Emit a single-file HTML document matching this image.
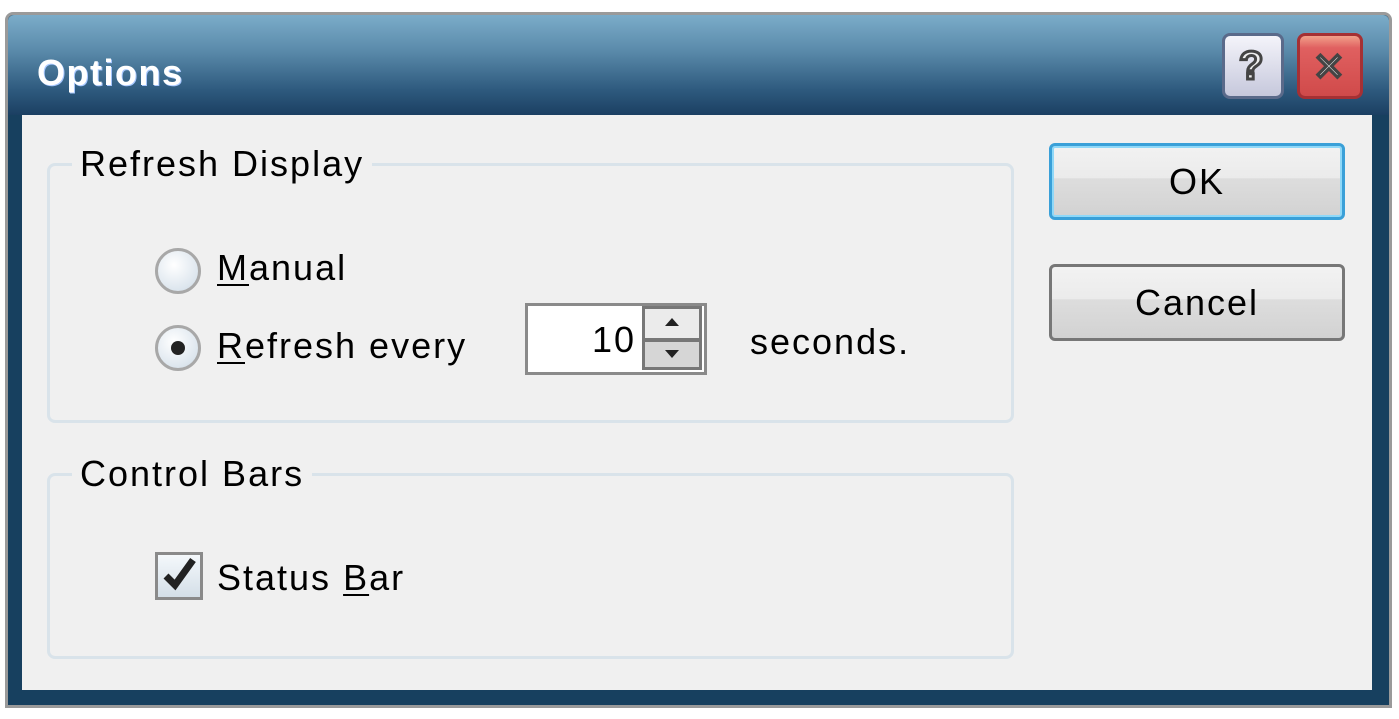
<!DOCTYPE html>
<html><head><meta charset="utf-8"><style>
*{margin:0;padding:0;box-sizing:border-box}
body{width:1399px;height:719px;background:#fff;position:relative;overflow:hidden;font-family:"Liberation Sans",sans-serif;}
.abs{position:absolute}
.win{left:5px;top:12px;width:1387px;height:696px;background:#17405f;border:3px solid #9a9a9a;border-radius:8px 8px 0 0;}
.title{left:8px;top:15px;width:1381px;height:100px;background:linear-gradient(#7bacc9,#5b8bab 35%,#2e5a7e 75%,#1b3f62);border-radius:6px 6px 0 0;}
.client{left:22px;top:115px;width:1350px;height:575px;background:#f0f0f0;}
.lbl{font-size:36px;color:#000;white-space:nowrap;line-height:1;letter-spacing:2px}
.grp{border:3px solid #d9e3ea;border-radius:8px}
.btn{border-radius:6px;background:linear-gradient(#f2f2f2 0,#ebebeb 45%,#dddddd 46%,#d2d2d2);text-align:center;font-size:36px;letter-spacing:2px}
u{text-decoration:underline;text-decoration-thickness:2px;text-underline-offset:4px}
</style></head><body>
<div class="abs win"></div>
<div class="abs title"></div>
<div class="abs" style="left:37px;top:52px;font-size:36px;font-weight:bold;color:#fff;letter-spacing:1.5px;text-shadow:1px 1px 0 #a8c8ff">Options</div>
<div class="abs" style="left:1222px;top:33px;width:62px;height:66px;border-radius:8px;border:3px solid #5a6a8a;background:linear-gradient(#f4f4fa,#c6c8dc);"></div>
<div class="abs" style="left:1239px;top:44px;font-size:40px;font-weight:bold;color:#eee;-webkit-text-stroke:3px #444;">?</div>
<div class="abs" style="left:1297px;top:33px;width:66px;height:66px;border-radius:8px;border:3px solid #a53034;background:linear-gradient(#f2a08a,#e06060 20%,#d04a4a);"></div>
<div class="abs" style="left:1313px;top:45px;font-size:38px;font-weight:bold;color:#eee;-webkit-text-stroke:2px #444;">✕</div>
<div class="abs client"></div>
<div class="abs grp" style="left:47px;top:163px;width:967px;height:260px"></div>
<div class="abs lbl" style="left:72px;top:146px;background:#f0f0f0;padding:0 8px">Refresh Display</div>
<div class="abs" style="left:155px;top:248px;width:46px;height:46px;border-radius:50%;border:3px solid #a8a8a8;background:radial-gradient(circle at 40% 35%,#fff,#dde6ee 70%,#c8d4de);"></div>
<div class="abs lbl" style="left:217px;top:250px"><u>M</u>anual</div>
<div class="abs" style="left:155px;top:325px;width:46px;height:46px;border-radius:50%;border:3px solid #a8a8a8;background:radial-gradient(circle at 40% 35%,#fff,#dde6ee 70%,#c8d4de);"></div>
<div class="abs" style="left:171px;top:341px;width:14px;height:14px;border-radius:50%;background:#222"></div>
<div class="abs lbl" style="left:217px;top:328px"><u>R</u>efresh every</div>
<div class="abs" style="left:525px;top:303px;width:182px;height:72px;border:3px solid #8a8a8a;background:#fff"></div>
<div class="abs lbl" style="left:592px;top:322px">10</div>
<div class="abs" style="left:642px;top:306px;width:60px;height:64px;border:3px solid #777;background:#777"></div>
<div class="abs" style="left:645px;top:309px;width:54px;height:29px;background:#ebebeb;"></div>
<div class="abs" style="left:645px;top:342px;width:54px;height:25px;background:#d6d6d6;"></div>
<div class="abs" style="left:665px;top:318px;width:0;height:0;border-left:7px solid transparent;border-right:7px solid transparent;border-bottom:8px solid #222"></div>
<div class="abs" style="left:665px;top:350px;width:0;height:0;border-left:7px solid transparent;border-right:7px solid transparent;border-top:8px solid #222"></div>
<div class="abs lbl" style="left:750px;top:324px">seconds.</div>
<div class="abs grp" style="left:47px;top:473px;width:967px;height:186px"></div>
<div class="abs lbl" style="left:72px;top:456px;background:#f0f0f0;padding:0 8px">Control Bars</div>
<div class="abs" style="left:155px;top:552px;width:48px;height:48px;border:3px solid #8a8a8a;background:linear-gradient(#f4f8fb,#d4dfe8)"></div>
<svg class="abs" style="left:160px;top:554px" width="40" height="40" viewBox="0 0 40 40"><path d="M6 22 L15 31 L33 6" fill="none" stroke="#222" stroke-width="7"/></svg>
<div class="abs lbl" style="left:217px;top:560px">Status <u>B</u>ar</div>
<div class="abs btn" style="left:1049px;top:143px;width:296px;height:77px;border:3px solid #3aa0d8;line-height:71px;box-shadow:inset 0 0 0 2px #8fd8f8">OK</div>
<div class="abs btn" style="left:1049px;top:264px;width:296px;height:77px;border:3px solid #777;line-height:71px">Cancel</div>
</body></html>
